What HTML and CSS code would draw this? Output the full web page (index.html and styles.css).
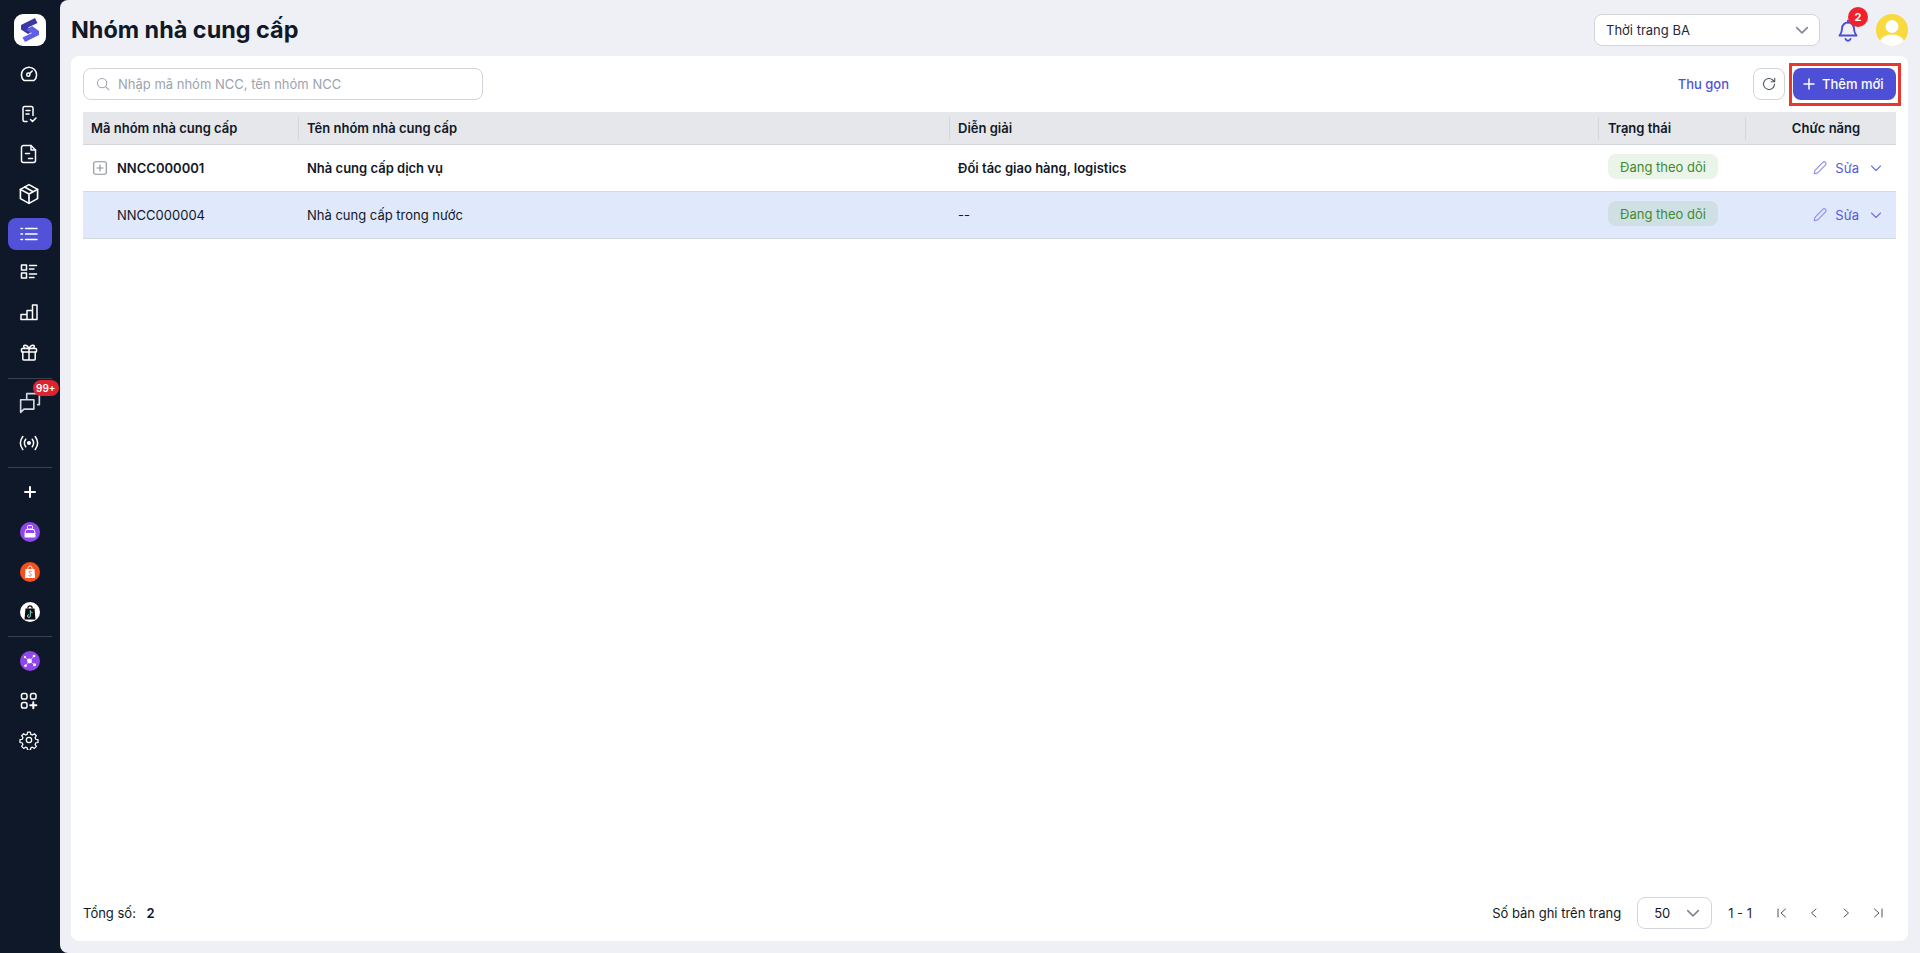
FILE: index.html
```html
<!DOCTYPE html>
<html lang="vi">
<head>
<meta charset="utf-8">
<title>Nhóm nhà cung cấp</title>
<link rel="stylesheet" href="styles.css">
</head>
<body>
<div class="app">
  <nav class="sidebar">
    <div class="logo">
      <svg width="32" height="32" viewBox="0 0 32 32"><rect width="32" height="32" rx="9" fill="#fff"/><path d="M7 11 21 4l2.500 5L14 13.500l6 3-6 3.500-7-4.500z" fill="#3b37a6"/><path d="M25 21 11 28l-2.500-4.500L18 19l-6-3 6-4 7 5z" fill="#5e60ea"/></svg>
    </div>
    <a class="item"><svg class="ic" viewBox="0 0 20 20"><path d="M5 16.500h10a7.600 7.600 0 1 0-10 0z"/><circle cx="9.300" cy="10.700" r="1.600"/><path d="m10.500 9.600 2.700-2.600"/></svg></a>
    <a class="item"><svg class="ic" viewBox="0 0 20 20"><path d="M8 17.500H5.500A1.500 1.500 0 0 1 4 16V4a1.500 1.500 0 0 1 1.500-1.500h7A1.500 1.500 0 0 1 14 4v7.500"/><path d="M7 6.500h4M7 10h3M11.500 15.500l2 2 3.500-3.500"/></svg></a>
    <a class="item"><svg class="ic" viewBox="0 0 20 20"><path d="M4.500 1.500H12l4.500 4.500v10.500a2 2 0 0 1-2 2h-10a2 2 0 0 1-2-2v-13a2 2 0 0 1 2-2z"/><path d="M12 1.500V6h4.500M6.500 9.500h4M9.500 14.500h4"/></svg></a>
    <a class="item"><svg class="ic ic-l" viewBox="0 0 20 20"><path d="m10 1.500 7.800 4.300v8.400L10 18.500l-7.800-4.300V5.800z"/><path d="M2.200 5.800 10 10l7.800-4.200M10 10v8.500M6 3.700 13.800 8"/></svg></a>
    <a class="item active"><svg class="ic" viewBox="0 0 20 20"><path d="M6.500 4.500H18M6.500 10H18M6.500 15.500H18M2 4.500h1.500M2 10h1.500M2 15.500h1.500"/></svg></a>
    <a class="item up2"><svg class="ic" viewBox="0 0 20 20"><rect x="2.500" y="3" width="5" height="5"/><rect x="2.500" y="11" width="5" height="5"/><path d="M10.500 3.500h7M10.500 7H15M10.500 12h7M10.500 15.500H15"/></svg></a>
    <a class="item up2"><svg class="ic" viewBox="0 0 20 20"><path d="M2 17.500h16V3h-4.500v14.500M13.500 8.500H8v9M8 12.500H2v5"/></svg></a>
    <a class="item up2"><svg class="ic" viewBox="0 0 20 20"><rect x="2.500" y="6.500" width="15" height="3.500" rx=".8"/><path d="M3.800 10v7a1 1 0 0 0 1 1h10.400a1 1 0 0 0 1-1v-7M10 6.500V18M10 6.500C8 2 3.500 2.500 5 5.500c.4.800 3 1 5 1zM10 6.500c2-4.500 6.500-4 5-1-.4.800-3 1-5 1z"/></svg></a>
    <div class="sep"></div>
    <a class="item chat">
      <svg class="ic" viewBox="0 0 20 20"><path d="M7 6.500V1.500h11.500v10H17M1.500 7h12v8.500H4.500l-3 3z"/></svg>
      <span class="count">99+</span>
    </a>
    <a class="item"><svg class="ic" viewBox="0 0 20 20"><circle cx="10" cy="10" r="1.300" fill="#fff"/><path d="M6.700 6.200c-1.600 2.300-1.600 5.300 0 7.600M13.300 6.200c1.600 2.300 1.600 5.300 0 7.600M3.800 3.500c-3 4-3 9 0 13M16.200 3.500c3 4 3 9 0 13"/></svg></a>
    <div class="sep"></div>
    <a class="item"><svg class="ic ic-c" viewBox="0 0 20 20"><path class="thick" d="M10 5v10M5 10h10"/></svg></a>
    <a class="item"><svg class="mk" viewBox="0 0 20 20"><circle cx="10" cy="10" r="10" fill="#8f46ea"/><rect x="7.500" y="3.500" width="5" height="3.500" rx="1" fill="none" stroke="#fff"/><path d="M6 7.500h8l1.200 4H4.800z" fill="none" stroke="#fff"/><rect x="4.500" y="12" width="11" height="3.500" rx=".8" fill="#fff"/></svg></a>
    <a class="item"><svg class="mk" viewBox="0 0 20 20"><circle cx="10" cy="10" r="10" fill="#f6501e"/><path d="M5.500 7h9l.6 9H4.900z" fill="#fff"/><path d="M7.800 7c0-4 4.400-4 4.400 0" fill="none" stroke="#fff"/><path d="M11.700 9.700c-1.600-1.200-3.300 0-2.300 1.200s2.700 1 1.900 2.500c-.6 1-2.200.7-2.900 0" fill="none" stroke="#f6501e" stroke-width=".8"/></svg></a>
    <a class="item"><svg class="mk" viewBox="0 0 20 20"><circle cx="10" cy="10" r="10" fill="#fff"/><path d="M5.500 6.500h9l1 11h-11z" fill="#0b0b0f"/><path d="M7.800 6.500c0-3.500 4.400-3.500 4.400 0" fill="none" stroke="#0b0b0f" stroke-width="1.200"/><path d="M10.300 8.500V14a1.400 1.400 0 1 1-1.400-1.400M10.300 8.500c.2 1.300 1 2 2.200 2.100" fill="none" stroke="#7fe6e6" stroke-width="1"/></svg></a>
    <div class="sep"></div>
    <a class="item"><svg class="mk" viewBox="0 0 20 20"><circle cx="10" cy="10" r="10" fill="#8f46ea"/><g fill="#fff"><circle cx="9.500" cy="10" r="2.400"/><circle cx="14" cy="5" r="1.300"/><circle cx="5" cy="6.200" r="1.100"/><circle cx="5.500" cy="14.800" r="1.300"/><circle cx="14.500" cy="13.800" r="1.500"/></g><path d="m9.500 10 4.500-5M9.500 10 5 6.200M9.500 10l-4 4.800M9.500 10l5 3.800" stroke="#fff" stroke-width=".6"/></svg></a>
    <a class="item"><svg class="ic" viewBox="0 0 20 20"><rect x="2.500" y="2.500" width="5.500" height="5.500" rx="1.800"/><rect x="11.500" y="2.500" width="5.500" height="5.500" rx="1.800"/><rect x="2.500" y="11.500" width="5.500" height="5.500" rx="1.800"/><path class="thick" d="M14.300 11.200v6M11.300 14.200h6"/></svg></a>
    <a class="item up1"><svg class="ic" viewBox="0 0 24 24"><circle cx="12" cy="12" r="3.200"/><path d="M10.300 2.500h3.400l.5 2.700 1.900.8 2.300-1.500 2.400 2.400-1.500 2.300.8 1.900 2.700.5v3.400l-2.700.5-.8 1.900 1.500 2.300-2.400 2.400-2.300-1.500-1.900.8-.5 2.700h-3.400l-.5-2.700-1.900-.8-2.300 1.500-2.400-2.400 1.500-2.300-.8-1.900-2.700-.5v-3.400l2.700-.5.8-1.900-1.500-2.300 2.400-2.400 2.300 1.500 1.900-.8z"/></svg></a>
  </nav>

  <main class="main">
    <header class="topbar">
      <h1 class="title">Nhóm nhà cung cấp</h1>
      <div class="top-actions">
        <div class="store-select">
          <span>Thời trang BA</span>
          <svg class="chev" viewBox="0 0 12 12"><path d="m1.500 4 4.500 4.500L10.500 4"/></svg>
        </div>
        <div class="bell">
          <svg width="24" height="24" viewBox="0 0 24 24" fill="none" stroke="#4b4fd8" stroke-width="1.900" stroke-linejoin="round" stroke-linecap="round"><path d="M12 4.500a6 6 0 0 0-6 6c0 4.500-1.800 6-2.500 7h17c-.7-1-2.500-2.500-2.500-7a6 6 0 0 0-6-6z"/><path d="M9.500 21a2.700 2.700 0 0 0 5 0M12 2.500v2"/></svg>
          <span class="bell-count">2</span>
        </div>
        <svg class="avatar" viewBox="0 0 32 32"><defs><clipPath id="av"><circle cx="16" cy="16" r="16"/></clipPath></defs><circle cx="16" cy="16" r="16" fill="#f8d93e"/><g clip-path="url(#av)" fill="#fff"><circle cx="16" cy="12.500" r="6.500"/><ellipse cx="16" cy="28" rx="12" ry="7.500"/></g></svg>
      </div>
    </header>

    <section class="card">
      <div class="toolbar">
        <label class="search">
          <svg class="search-ic" viewBox="0 0 16 16"><circle cx="7" cy="7" r="5.300"/><path d="m11 11 3.700 3.700"/></svg>
          <span>Nhập mã nhóm NCC, tên nhóm NCC</span>
        </label>
        <div class="tools">
          <a class="link">Thu gọn</a>
          <button class="refresh"><svg viewBox="0 0 16 16"><path d="M13.500 8A5.500 5.500 0 1 1 11.800 4l1.700 1.500"/><path d="M13.700 2.200v3.500h-3.500"/></svg></button>
          <div class="add-wrap">
            <button class="add"><svg viewBox="0 0 12 12"><path d="M6 1v10M1 6h10"/></svg>Thêm mới</button>
            <span class="highlight"></span>
          </div>
        </div>
      </div>

      <div class="table">
        <div class="row head">
          <div class="cell">Mã nhóm nhà cung cấp</div>
          <div class="cell">Tên nhóm nhà cung cấp</div>
          <div class="cell">Diễn giải</div>
          <div class="cell status">Trạng thái</div>
          <div class="cell center">Chức năng</div>
        </div>
        <div class="row strong">
          <div class="cell code">
            <svg class="expand" viewBox="0 0 14 14"><rect x=".7" y=".7" width="12.600" height="12.600" rx="1.500"/><path d="M7 3.500v7M3.500 7h7"/></svg>
            NNCC000001
          </div>
          <div class="cell">Nhà cung cấp dịch vụ</div>
          <div class="cell">Đối tác giao hàng, logistics</div>
          <div class="cell status"><span class="badge">Đang theo dõi</span></div>
          <div class="cell acts">
            <svg class="pen" viewBox="0 0 14 14"><path d="M2 12l.6-3L9.500 2a1.500 1.500 0 0 1 2.300 2.300L5 11.300z"/></svg>
            <span class="edit">Sửa</span>
            <svg class="chev-act" viewBox="0 0 12 12"><path d="m1.500 4 4.500 4.500L10.500 4"/></svg>
          </div>
        </div>
        <div class="row selected">
          <div class="cell code">NNCC000004</div>
          <div class="cell">Nhà cung cấp trong nước</div>
          <div class="cell">--</div>
          <div class="cell status"><span class="badge">Đang theo dõi</span></div>
          <div class="cell acts">
            <svg class="pen" viewBox="0 0 14 14"><path d="M2 12l.6-3L9.500 2a1.500 1.500 0 0 1 2.300 2.300L5 11.300z"/></svg>
            <span class="edit">Sửa</span>
            <svg class="chev-act" viewBox="0 0 12 12"><path d="m1.500 4 4.500 4.500L10.500 4"/></svg>
          </div>
        </div>
      </div>

      <footer class="footer">
        <div class="total">Tổng số: <b>2</b></div>
        <div class="pager">
          <span class="per">Số bản ghi trên trang</span>
          <div class="size"><span>50</span><svg class="chev" viewBox="0 0 12 12"><path d="m1.500 4 4.500 4.500L10.500 4"/></svg></div>
          <span class="range">1 - 1</span>
          <div class="nav">
            <svg viewBox="0 0 12 12"><path d="M2 2v8M9.500 2 5 6l4.500 4"/></svg>
            <svg viewBox="0 0 12 12"><path d="M8 2 3.500 6 8 10"/></svg>
            <svg viewBox="0 0 12 12"><path d="M4 2l4.500 4L4 10"/></svg>
            <svg viewBox="0 0 12 12"><path d="M10 2v8M2.500 2 7 6l-4.500 4"/></svg>
          </div>
        </div>
      </footer>
    </section>
  </main>
</div>
</body>
</html>
```

FILE: styles.css
```css
* { box-sizing: border-box; }
html, body { margin: 0; height: 100%; }
body {
  font-family: Inter, "Liberation Sans", sans-serif;
  font-size: 13px;
  color: #111827;
  background: #0f1829;
  overflow: hidden;
}
.app { display: flex; height: 953px; }

.sidebar {
  width: 60px;
  flex: none;
  background: #0f1829;
  display: flex;
  flex-direction: column;
  align-items: center;
  padding-top: 14px;
}
.logo { height: 32px; margin-bottom: 8px; }
.logo svg { display: block; }
.item {
  position: relative;
  width: 44px;
  height: 40px;
  flex: none;
  display: flex;
  align-items: center;
  justify-content: center;
  border-radius: 8px;
}
.item.active { background: #5152d8; height: 32px; margin: 4px 0; }
.ic { width: 20px; height: 20px; margin-right: 2px; fill: none; stroke: #fff; stroke-width: 1.500; stroke-linecap: round; stroke-linejoin: round; }
.ic-l { width: 22px; height: 22px; }
.ic-c { margin-right: 0; }
.thick { stroke-width: 2; }
.mk { width: 20px; height: 20px; }
.up2 .ic { margin-bottom: 4px; }
.up1 .ic { margin-bottom: 2px; }
.chat .ic { width: 22px; height: 22px; margin-right: 0; stroke: #d5d8de; }
.sep { width: 44px; height: 1px; background: #3a4252; margin: 4px 0; flex: none; }
.count {
  position: absolute;
  left: 25px;
  top: -3px;
  height: 16px;
  min-width: 24px;
  padding: 0 3px;
  border-radius: 8px;
  background: #dc2430;
  color: #fff;
  font-size: 10px;
  font-weight: 600;
  line-height: 16px;
  text-align: center;
}

.main {
  flex: 1;
  min-width: 0;
  background: #eef0f5;
  border-radius: 8px 0 0 8px;
  padding: 0 12px 12px 11px;
  display: flex;
  flex-direction: column;
}
.topbar { height: 56px; flex: none; display: flex; align-items: center; justify-content: space-between; padding-top: 4px; }
.title { margin: 0; font-size: 23.4px; line-height: 32px; font-weight: 700; color: #111827; }
.top-actions { display: flex; align-items: center; }
.store-select {
  width: 226px;
  height: 32px;
  display: flex;
  align-items: center;
  justify-content: space-between;
  padding: 0 10px 0 11px;
  background: #fff;
  border: 1px solid #d1d5db;
  border-radius: 8px;
  font-size: 13px;
  color: #1f2937;
}
.chev { width: 14px; height: 14px; fill: none; stroke: #858b96; stroke-width: 1.500; stroke-linecap: round; stroke-linejoin: round; }
.bell { position: relative; width: 24px; height: 24px; margin: 0 16px 0 16px; }
.bell svg { display: block; }
.bell-count {
  position: absolute;
  left: 12px;
  top: -11px;
  width: 20px;
  height: 20px;
  border-radius: 50%;
  background: #f0222c;
  color: #fff;
  font-size: 11px;
  font-weight: 700;
  line-height: 20px;
  text-align: center;
}
.avatar { width: 32px; height: 32px; display: block; }

.card {
  flex: 1;
  min-height: 0;
  background: #fff;
  border-radius: 8px;
  padding: 12px 12px 0;
  display: flex;
  flex-direction: column;
}
.toolbar { height: 32px; flex: none; display: flex; align-items: center; justify-content: space-between; margin-bottom: 12px; }
.search {
  width: 400px;
  height: 32px;
  display: flex;
  align-items: center;
  gap: 8px;
  padding: 0 12px;
  border: 1px solid #d1d5db;
  border-radius: 8px;
  color: #9ca3af;
  font-size: 13px;
}
.search-ic { width: 14px; height: 14px; fill: none; stroke: #9ca3af; stroke-width: 1.200; stroke-linecap: round; }
.tools { display: flex; align-items: center; }
.link { color: #4f52d8; font-size: 13px; font-weight: 500; margin-right: 24px; }
.refresh {
  width: 32px;
  height: 32px;
  padding: 0;
  background: #fff;
  border: 1px solid #d1d5db;
  border-radius: 8px;
  margin-right: 8px;
  display: flex;
  align-items: center;
  justify-content: center;
}
.refresh svg { width: 16px; height: 16px; fill: none; stroke: #4b5563; stroke-width: 1.100; stroke-linecap: round; stroke-linejoin: round; }
.add-wrap { position: relative; }
.add {
  width: 103px;
  height: 32px;
  display: flex;
  align-items: center;
  justify-content: flex-start;
  gap: 7px;
  padding: 0 0 0 10px;
  border: 0;
  border-radius: 8px;
  background: #4d50d6;
  color: #fff;
  font-family: inherit;
  font-size: 13px;
  font-weight: 500;
}
.add svg { width: 12px; height: 12px; fill: none; stroke: #fff; stroke-width: 1.500; stroke-linecap: round; }
.highlight { position: absolute; left: -4px; top: -5px; width: 112px; height: 43px; border: 3px solid #e5392f; pointer-events: none; }

.table { flex: 1; min-height: 0; }
.row {
  display: grid;
  grid-template-columns: 216px 651px 649px 147px 150px;
  align-items: center;
  height: 47px;
  border-bottom: 1px solid #d5d9e2;
}
.cell { padding-left: 8px; min-width: 0; }
.status { padding-left: 9px; }
.head { height: 33px; background: #e5e7eb; font-weight: 600; border-bottom-color: #d1d5db; }
.head .cell { height: 23px; display: flex; align-items: center; border-right: 1px solid #d3d6dc; }
.head .cell:last-child { border-right: 0; justify-content: center; padding-left: 10px; }
.strong { font-weight: 600; }
.selected { background: #e0e8fb; }
.code { display: flex; align-items: center; padding-left: 34px; position: relative; }
.expand { position: absolute; left: 10px; top: 50%; margin-top: -7px; width: 14px; height: 14px; fill: none; stroke: #8a909b; stroke-width: 1.100; }
.badge {
  display: block;
  height: 25px;
  line-height: 26px;
  width: 110px;
  margin-top: -3px;
  text-align: center;
  border-radius: 8px;
  font-weight: 400;
  color: #3f8a2f;
  background: #ebf4e8;
}
.selected .badge { background: #cfe0e4; }
.acts { display: flex; align-items: center; justify-content: flex-end; padding-right: 14px; }
.pen { width: 16px; height: 16px; fill: none; stroke: #8f91e6; stroke-width: 1; stroke-linejoin: round; margin-right: 7px; }
.edit { color: #5558d9; font-weight: 400; margin-right: 11px; }
.chev-act { width: 12px; height: 12px; fill: none; stroke: #6f72e0; stroke-width: 1.100; stroke-linecap: round; stroke-linejoin: round; }

.footer { height: 56px; flex: none; display: flex; align-items: center; justify-content: space-between; }
.total b { font-weight: 600; margin-left: 7px; }
.pager { display: flex; align-items: center; }
.per { margin-right: 16px; }
.size {
  width: 75px;
  height: 32px;
  display: flex;
  align-items: center;
  justify-content: space-between;
  padding: 0 11px 0 16px;
  border: 1px solid #d1d5db;
  border-radius: 8px;
  font-size: 13px;
}
.range { margin: 0 24px 0 16px; color: #1f2937; }
.nav { display: flex; gap: 20px; padding-right: 12px; }
.nav svg { width: 12px; height: 12px; fill: none; stroke: #4b5563; stroke-width: 1; stroke-linecap: round; stroke-linejoin: round; }
```
